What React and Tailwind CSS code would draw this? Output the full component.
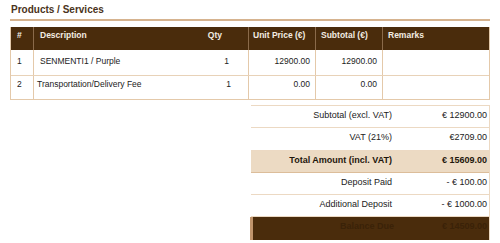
const items = [
  { no: '1', desc: 'SENMENTI1 / Purple', qty: '1', price: '12900.00', subtotal: '12900.00', row: 'h-[26px] border-b', pad: 'pt-[6px]', indent: 'pl-[6px]', qtyPad: 'pr-[19px]' },
  { no: '2', desc: 'Transportation/Delivery Fee', qty: '1', price: '0.00', subtotal: '0.00', row: 'h-[23px]', pad: 'pt-[3px]', indent: 'pl-[3px]', qtyPad: 'pr-[17px]' },
]

const totals = [
  { label: 'Subtotal (excl. VAT)', value: '€ 12900.00', h: 'h-[22px]' },
  { label: 'VAT (21%)', value: '€2709.00', h: 'h-[23px]' },
  { label: 'Total Amount (incl. VAT)', value: '€ 15609.00', h: 'h-[22px]', kind: 'total' },
  { label: 'Deposit Paid', value: '- € 100.00', h: 'h-[22px]' },
  { label: 'Additional Deposit', value: '- € 1000.00', h: 'h-[22px]' },
  { label: 'Balance Due', value: '€ 14509.00', h: 'h-[23px]', kind: 'balance' },
]

const cols = 'grid grid-cols-[23px_156px_59px_67px_67px_106px]'

export default function App() {
  return (
    <div className="w-[500px] h-[243px] bg-white pt-[4px] font-['Liberation_Sans',Arial,sans-serif] text-[8.5px] leading-[10px] text-[#222] overflow-hidden">
      {/* ─── Section title ─── */}
      <div className="mx-[10px] border-b-2 border-[#d6b38f] pb-[3px]">
        <h2 className="pl-[1px] text-[10px] leading-[12px] font-bold text-[#4a3320]">Products / Services</h2>
      </div>

      {/* ─── Items table ─── */}
      <div className="mx-[10px] mt-[6px] border border-t-0 border-[#e4c9aa]">
        <div className={`${cols} h-[23px] bg-[#4a2c0c] text-[#f4ece2] font-bold`}>
          <div className="pl-[6px] pt-[3px] border-r border-[#8a6a4a]">#</div>
          <div className="pl-[6px] pt-[3px]">Description</div>
          <div className="pr-[26px] pt-[3px] text-right border-r border-[#8a6a4a]">Qty</div>
          <div className="pl-[4px] pt-[3px] border-r border-[#8a6a4a]">Unit Price (€)</div>
          <div className="pl-[5px] pt-[3px] border-r border-[#8a6a4a]">Subtotal (€)</div>
          <div className="pl-[5px] pt-[3px]">Remarks</div>
        </div>
        {items.map((it) => (
          <div key={it.no} className={`${cols} ${it.row} border-[#e8d2b8]`}>
            <div className={`pl-[6px] ${it.pad} border-r border-[#e4c9aa]`}>{it.no}</div>
            <div className={`${it.indent} ${it.pad} whitespace-nowrap`}>{it.desc}</div>
            <div className={`${it.qtyPad} ${it.pad} text-right border-r border-[#e4c9aa]`}>{it.qty}</div>
            <div className={`pr-[5px] ${it.pad} text-right border-r border-[#e4c9aa]`}>{it.price}</div>
            <div className={`pr-[5px] ${it.pad} text-right border-r border-[#e4c9aa]`}>{it.subtotal}</div>
            <div />
          </div>
        ))}
      </div>

      {/* ─── Totals ─── */}
      <div className="ml-[251px] w-[239px] mt-[5px] border-t border-r border-[#ecd9c3] text-[9px]">
        {totals.map((t) => {
          const row =
            t.kind === 'total'
              ? 'bg-[#ecdac3] font-bold text-[#1f160c] border-b border-[#dcbd9a]'
              : t.kind === 'balance'
              ? 'bg-[#4a2c0c] font-bold text-[#3a2208] border-l-[3px] border-[#c0946c] -ml-[1px]'
              : 'border-b border-[#ecd9c3]'
          return (
            <div key={t.label} className={`grid grid-cols-[146px_1fr] ${t.h} ${row}`}>
              <div className="pr-[5px] pt-[4px] text-right whitespace-nowrap">{t.label}</div>
              <div className="pr-[2px] pt-[4px] text-right whitespace-nowrap">{t.value}</div>
            </div>
          )
        })}
      </div>
    </div>
  )
}
